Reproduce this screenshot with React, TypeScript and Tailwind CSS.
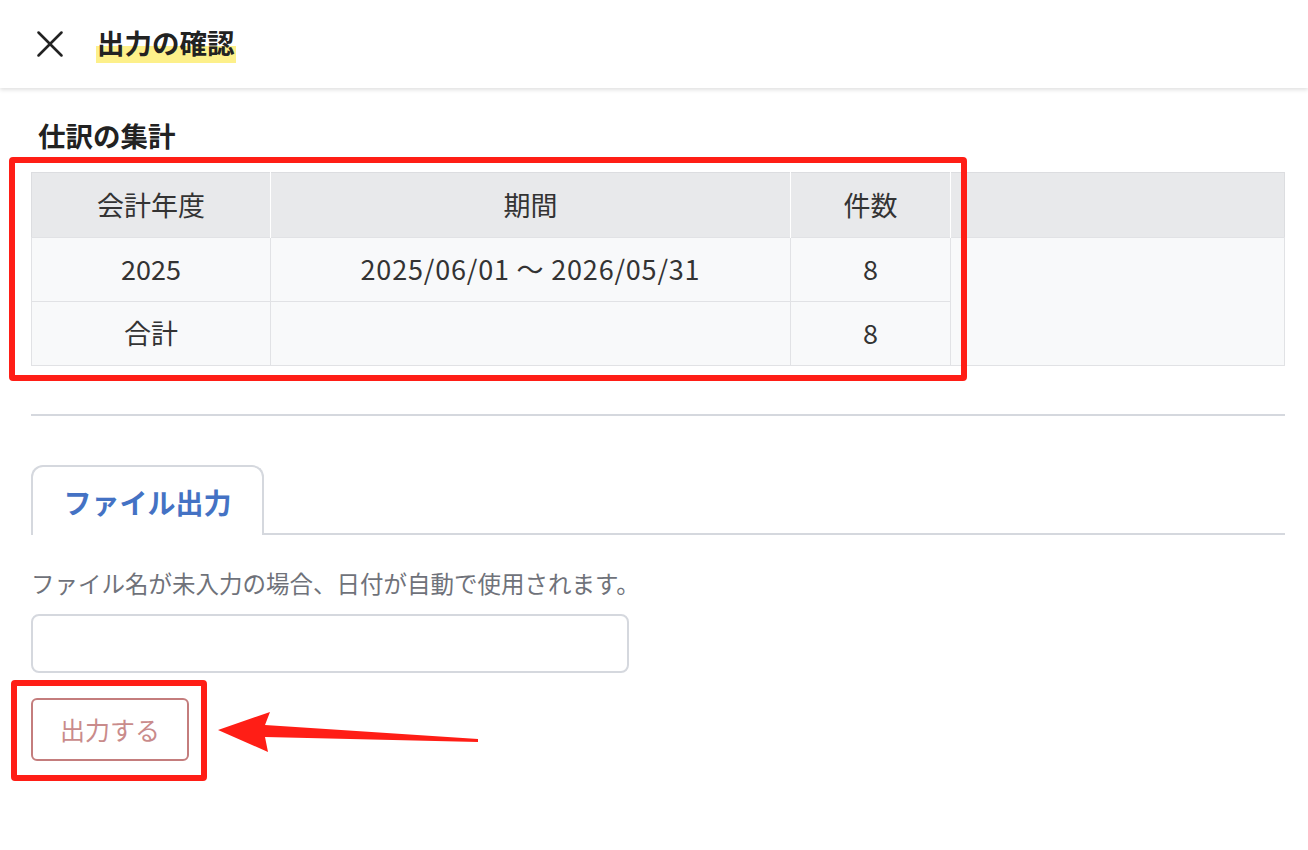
import { X } from "lucide-react";

const FONT = { fontFamily: '"Noto Sans CJK JP", "Noto Sans", sans-serif' };

const ROWS = [
  { year: "2025", period: "2025/06/01 〜 2026/05/31", count: "8" },
  { year: "合計", period: "", count: "8" },
];

// red callout frame drawn over a region
function Callout({ className }: { className: string }) {
  return (
    <div
      aria-hidden
      className={`pointer-events-none absolute rounded-[4px] border-[6px] border-[#ff1e16] ${className}`}
    />
  );
}

export default function App() {
  return (
    <div className="min-h-[850px] bg-white text-[#333]" style={FONT}>
      {/* dialog header */}
      <header className="flex h-[88px] items-center gap-[23px] px-[27px] shadow-[0_2px_4px_rgba(0,0,0,0.12)]">
        <X size={46} strokeWidth={1.35} className="text-[#222]" />
        <h1 className="bg-[linear-gradient(transparent_55%,#fdf08a_55%)] px-[1px] pb-[4px] text-[27.5px] font-bold leading-[34px] text-[#222]">
          出力の確認
        </h1>
      </header>

      <main className="pl-[31px] pr-[23px]">
        <h2 className="mt-[30px] pl-[7px] text-[27.5px] font-bold leading-[34px] text-[#222]">
          仕訳の集計
        </h2>

        {/* summary table */}
        <div className="relative mt-[20px]">
          <table className="w-full border-collapse border border-[#dcdde0] text-[27px]">
            <colgroup>
              <col className="w-[239px]" />
              <col className="w-[520px]" />
              <col className="w-[160px]" />
              <col />
            </colgroup>
            <thead>
              <tr className="h-[65px] bg-[#e8e9eb]">
                <th className="border-r border-white font-normal">会計年度</th>
                <th className="border-r border-white font-normal">期間</th>
                <th className="border-r border-white font-normal">件数</th>
                <th />
              </tr>
            </thead>
            <tbody className="bg-[#f8f9fa]">
              {ROWS.map((r, i) => (
                <tr key={r.year} className="h-[64px]">
                  <td className="border border-[#e1e2e5] text-center">{r.year}</td>
                  <td className="border border-[#e1e2e5] text-center tracking-[0.03em]">{r.period}</td>
                  <td className="border border-[#e1e2e5] text-center">{r.count}</td>
                  {i === 0 && <td rowSpan={2} className="border border-[#e1e2e5]" />}
                </tr>
              ))}
            </tbody>
          </table>
          <Callout className="-left-[22px] -top-[15px] h-[224px] w-[958px]" />
        </div>

        <hr className="mt-[48px] border-t-2 border-[#d5d8de]" />

        {/* tabs */}
        <div className="mt-[49px] flex items-end border-b-2 border-[#d5d8de]">
          <div className="-mb-[2px] flex h-[70px] w-[233px] items-center justify-center rounded-t-[12px] border-2 border-b-0 border-[#d5d8de] bg-white pt-[2px] text-[28px] font-bold text-[#4472c4]">
            ファイル出力
          </div>
        </div>

        <p className="mt-[32px] text-[23.5px] leading-[32px] text-[#6f727a]">
          ファイル名が未入力の場合、日付が自動で使用されます。
        </p>

        <input
          type="text"
          className="mt-[15px] block h-[59px] w-[598px] rounded-[8px] border-2 border-[#d5d8de] px-3 text-[22px] outline-none"
        />

        <div className="relative mt-[25px] w-fit">
          <button className="flex h-[63px] w-[158px] items-center justify-center rounded-[6px] border-2 border-[#c47d7d] bg-white text-[25px] text-[#c98b8b]">
            出力する
          </button>
          <Callout className="-left-[20px] -top-[18px] h-[101px] w-[196px]" />
          {/* pointer arrow */}
          <svg
            aria-hidden
            className="absolute left-[187px] top-[10px]"
            width="262"
            height="44"
            viewBox="187 10 262 44"
          >
            <polygon
              fill="#ff1e16"
              points="187,32 239,14 234,27 447,41 447,44 234,39 237,54"
            />
          </svg>
        </div>
      </main>
    </div>
  );
}
